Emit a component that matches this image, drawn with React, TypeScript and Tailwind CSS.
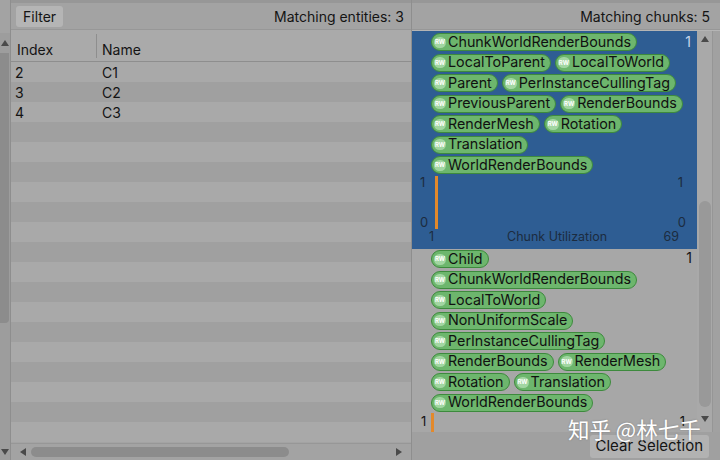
import React from "react"

const chunkOneRows = [
  ["ChunkWorldRenderBounds"],
  ["LocalToParent", "LocalToWorld"],
  ["Parent", "PerInstanceCullingTag"],
  ["PreviousParent", "RenderBounds"],
  ["RenderMesh", "Rotation"],
  ["Translation"],
  ["WorldRenderBounds"],
]

const chunkTwoRows = [
  ["Child"],
  ["ChunkWorldRenderBounds"],
  ["LocalToWorld"],
  ["NonUniformScale"],
  ["PerInstanceCullingTag"],
  ["RenderBounds", "RenderMesh"],
  ["Rotation", "Translation"],
  ["WorldRenderBounds"],
]

const entities = [
  { index: 2, name: "C1" },
  { index: 3, name: "C2" },
  { index: 4, name: "C3" },
]

function Tag({ name }: { name: string }) {
  return (
    <span className="flex h-[18px] items-center rounded-full border border-[#3d8a3d] bg-[#6db66d] pl-[2px] pr-[5px] text-[14.3px] leading-none text-[#111]">
      <span className="mr-[2px] flex h-[11px] w-[12px] items-center justify-center rounded-full bg-[#a2d6a2] text-[6px] font-bold leading-none text-white">
        RW
      </span>
      {name}
    </span>
  )
}

function TagRows({ rows }: { rows: string[][] }) {
  return (
    <div className="flex flex-col gap-[2.5px]">
      {rows.map((row, i) => (
        <div key={i} className="flex gap-[4px]">
          {row.map((name) => (
            <Tag key={name} name={name} />
          ))}
        </div>
      ))}
    </div>
  )
}

function Triangle({ dir, className }: { dir: "up" | "down" | "left" | "right"; className?: string }) {
  const pts = {
    up: "0,7 4,1 8,7",
    down: "0,1 8,1 4,7",
    left: "7,0 7,8 1,4",
    right: "1,0 1,8 7,4",
  }[dir]
  return (
    <svg width="8" height="8" viewBox="0 0 8 8" className={className}>
      <polygon points={pts} fill="#4a4a4a" />
    </svg>
  )
}

export default function App() {
  return (
    <div className="relative flex h-[460px] w-[720px] overflow-hidden bg-[#a3a3a3] font-['Inter','Noto_Sans',sans-serif] text-[14px] text-[#141414]">
      {/* outer vertical scrollbar */}
      <div className="flex w-[11px] flex-col border-r border-[#8e8e8e] bg-[#9d9d9d]">
        <div className="h-[33px] bg-[#a3a3a3]" />
        <div className="flex h-[20px] items-center justify-center">
          <Triangle dir="up" />
        </div>
        <div className="h-[270px] w-[9px] rounded-br-[4px] bg-[#8c8c8c]" />
        <div className="flex-1" />
        <div className="flex h-[17px] items-center justify-center">
          <Triangle dir="down" />
        </div>
      </div>

      {/* entities panel */}
      <div className="flex w-[401px] flex-col border-r border-[#8e8e8e]">
        <div className="flex h-[30px] items-center justify-between border-t-[3px] border-b border-[#979797] bg-[#a3a3a3] pl-[5px] pr-[7px]">
          <button className="flex h-[21px] items-center rounded-[3px] bg-[#b5b5b5] px-[7px] text-[14px] text-[#141414]">
            Filter
          </button>
          <span>Matching entities: 3</span>
        </div>
        <div className="flex h-[32px] items-end border-b border-[#8e8e8e] bg-[#aaaaaa] pb-[1px]">
          <div className="flex w-[85px] items-center pl-[6px]">Index</div>
          <div className="mb-[2px] h-[24px] w-px bg-[#8e8e8e]" />
          <div className="pl-[5px]">Name</div>
        </div>
        <div className="flex flex-1 flex-col overflow-hidden">
          {Array.from({ length: 19 }).map((_, i) => (
            <div
              key={i}
              className={`flex h-[20px] shrink-0 items-center ${i % 2 === 0 ? "bg-[#a9a9a9]" : "bg-[#a0a0a0]"}`}
            >
              <div className="w-[86px] pl-[4px]">{entities[i]?.index}</div>
              <div className="pl-[5px]">{entities[i]?.name}</div>
            </div>
          ))}
        </div>
        <div className="flex h-[17px] items-center gap-[4px] border-t border-[#979797] bg-[#a3a3a3] px-[8px]">
          <Triangle dir="left" />
          <div className="h-[10px] w-[258px] rounded-full bg-[#8c8c8c]" />
          <div className="flex-1" />
          <Triangle dir="right" />
        </div>
      </div>

      {/* chunks panel */}
      <div className="flex flex-1 flex-col">
        <div className="flex h-[30px] items-center justify-end border-t-[3px] border-b border-[#979797] bg-[#a3a3a3] pr-[10px]">
          Matching chunks: 5
        </div>
        <div className="flex h-[402px] border-t border-[#b5b5b5]">
          <div className="flex flex-1 flex-col overflow-hidden">
            {/* selected chunk */}
            <div className="relative flex h-[218px] shrink-0 flex-col bg-[#2e5d93] pl-[19px] pt-[2px]">
              <TagRows rows={chunkOneRows} />
              <span className="absolute right-[6px] top-[0px] text-[#c6d6ea]">1</span>
              <div className="mt-[1px] flex h-[54px] text-[13px] leading-[14px] text-[#1c2c40]">
                <div className="-ml-[11px] flex w-[12px] flex-col justify-between">
                  <span>1</span>
                  <span>0</span>
                </div>
                <div className="ml-[3px] mt-[1px] h-[53px] w-[3px] bg-[#e3892b]" />
                <div className="flex-1" />
                <div className="mr-[11px] flex flex-col justify-between">
                  <span>1</span>
                  <span>0</span>
                </div>
              </div>
              <div className="flex items-center pr-[18px] text-[12.5px] leading-[16px] text-[#1c2c40]">
                <span className="ml-[-2px] w-[60px]">1</span>
                <span className="flex-1 pl-[18px]">Chunk Utilization</span>
                <span>69</span>
              </div>
            </div>
            {/* second chunk */}
            <div className="relative flex shrink-0 flex-col bg-[#a7a7a7] pl-[19px] pt-[1px]">
              <TagRows rows={chunkTwoRows} />
              <span className="absolute right-[5px] top-[-2px]">1</span>
              <div className="mt-[2px] flex h-[30px] text-[13px] leading-[14px] text-[#141414]">
                <div className="-ml-[10px] w-[8px]">1</div>
                <div className="ml-[2px] mt-[-1px] h-[30px] w-[3px] bg-[#e3892b]" />
                <div className="flex-1" />
                <div className="mr-[12px]">1</div>
              </div>
            </div>
          </div>
          <div className="flex w-[15px] flex-col items-center bg-[#a9a9a9] pt-[4px]">
            <Triangle dir="up" />
            <div className="mt-[158px] h-[206px] w-[12px] rounded-full bg-[#999999]" />
            <div className="mt-[8px]">
              <Triangle dir="down" />
            </div>
          </div>
          <div className="w-[8px] border-l border-[#969696] bg-[#a1a1a1]" />
        </div>
        <div className="flex flex-1 items-end justify-end bg-[#a0a0a0] pb-[2px] pr-[11px]">
          <button className="h-[23px] rounded-[3px] bg-[#b2b2b2] px-[6px] text-[15px] text-[#141414]">
            Clear Selection
          </button>
        </div>
      </div>

      {/* watermark */}
      <div className="absolute left-[568px] top-[418px] font-['Noto_Sans_CJK_SC',sans-serif] text-[21.5px] leading-none text-white [text-shadow:0_0_2px_rgba(0,0,0,0.25)]">
        知乎 @林七千
      </div>
    </div>
  )
}
